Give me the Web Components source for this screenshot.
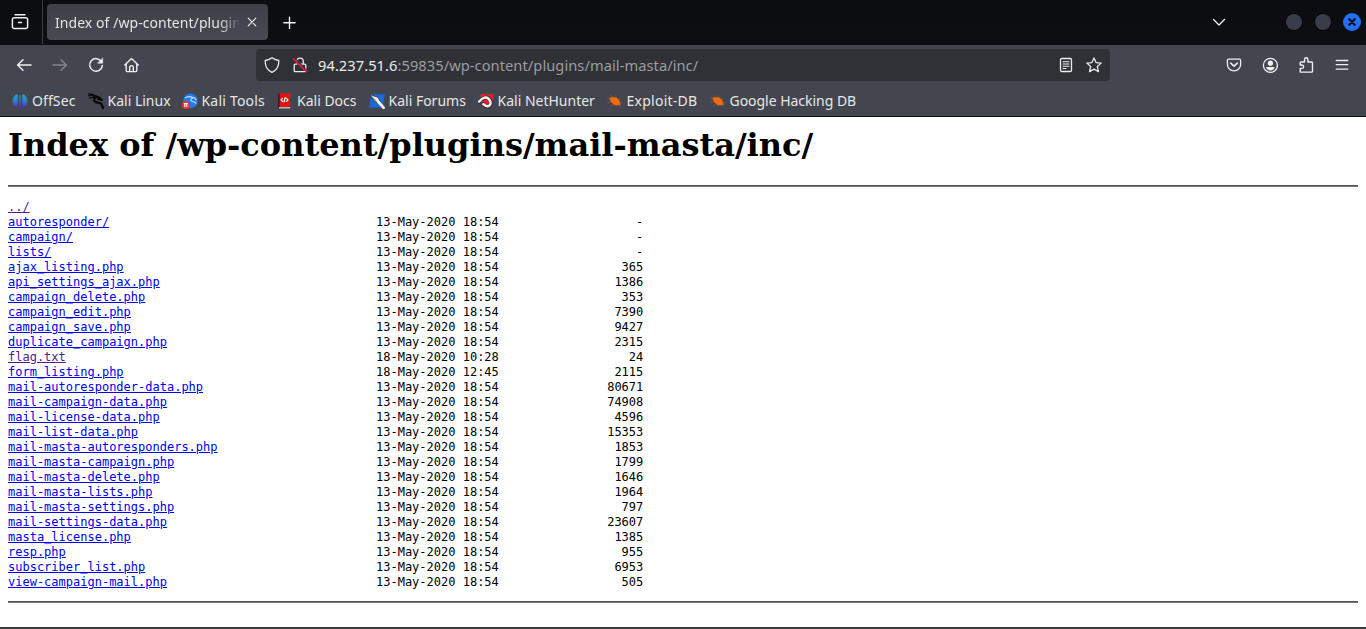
<!DOCTYPE html>
<html lang="en"><head><meta charset="utf-8"><title>Index of /wp-content/plugins/mail-masta/inc/</title>
<style>
html,body{margin:0;height:100%;overflow:hidden;background:#fff}
body{font-family:"Noto Sans",sans-serif}
</style></head><body>
<browser-window></browser-window>
<script>
const S = (w,body,h=w,vb=`0 0 ${w} ${h}`) => `<svg xmlns="http://www.w3.org/2000/svg" width="${w}" height="${h}" viewBox="${vb}" fill="none" stroke="currentColor" stroke-width="1.3" stroke-linecap="round" stroke-linejoin="round">${body}</svg>`;
const ICONS = {
 view: S(18,'<path d="M4 1.7h10" stroke-width="1.4"/><path d="M3.2 4.7h11.6a1.8 1.8 0 0 1 1.8 1.8v7.2a1.8 1.8 0 0 1-1.8 1.8H3.2a1.8 1.8 0 0 1-1.8-1.8V6.5a1.8 1.8 0 0 1 1.8-1.8z" stroke-width="1.5"/><path d="M7.5 9.5h3" stroke-width="1.5"/>'),
 close: S(10,'<path d="M1.2 1.2l7.6 7.6M8.8 1.2L1.2 8.8" stroke-width="1.1"/>'),
 plus: S(14,'<path d="M6.5 1.200v11.200M.9 6.800h11.200" stroke-width="1.400"/>'),
 chev: S(14,'<path d="M1.5 4.5L7 10l5.5-5.5" stroke-width="1.3"/>'),
 back: S(16,'<path d="M15 8H1.6M7 2.8L1.6 8 7 13.2" stroke-width="1.5"/>'),
 fwd: S(16,'<path d="M1 8h13.4M9 2.8L14.4 8 9 13.2" stroke-width="1.5"/>'),
 reload: S(16,'<path d="M13.4 4.6A6.3 6.3 0 1 0 14.3 8.6" stroke-width="1.5"/><path d="M14.7 1.2v5H9.8z" fill="currentColor" stroke-width=".5"/>'),
 home: S(16,'<path d="M.8 8L7.500 1.500 14.200 8M2.200 7v6.600a1 1 0 0 0 1 1h8.600a1 1 0 0 0 1-1V7M5.700 14.500V10.200A1.700 1.700 0 0 1 7.500 8.600a1.700 1.700 0 0 1 1.800 1.600v4.300" stroke-width="1.4"/>'),
 shield: S(16,'<path d="M8 .8C6 2.5 3.6 3.1 1.2 3.5 1 9 3 13.2 8 15.3c5-2.1 7-6.3 6.8-11.8C12.400 3.100 10 2.500 8 .8z"/>'),
 lock: S(16,'<path d="M4.700 4.500a3.300 3.300 0 0 1 6.600 0V7.200M4.700 7.200H3.400a1.200 1.200 0 0 0-1.200 1.200v5a1.200 1.200 0 0 0 1.200 1.200h9.200a1.200 1.200 0 0 0 1.200-1.200v-5a1.200 1.200 0 0 0-1.200-1.200H8"/><path d="M2.500 .8l13 13" stroke="#303137" stroke-width="1.100"/><path d="M1.500 1.700l13 13" stroke="#ff0f4d" stroke-width="1.600"/>'),
 reader: S(16,'<rect x="2.500" y="1.500" width="11" height="13" rx="1.200"/><path d="M5 4.700h6M5 7h6M5 9.300h6M5 11.500h3" stroke-width="1.100"/>'),
 star: S(16,'<path d="M8 .9l2.100 4.700 5.100.5-3.900 3.400 1.200 5.100L8 12.100l-4.500 2.500 1.200-5.100L.8 6.100l5.100-.5z" stroke-width="1.250"/>'),
 pocket: S(16,'<path d="M2.600 2.200h10.800a1.200 1.200 0 0 1 1.200 1.200V7.500A6.600 6.300 0 0 1 1.400 7.500V3.400a1.200 1.200 0 0 1 1.200-1.200z"/><path d="M4.700 6.100L8 9.100l3.300-3" stroke-width="1.500"/>'),
 user: S(16,'<circle cx="8.400" cy="8.300" r="7" stroke-width="1.300"/><g fill="currentColor" stroke="none"><circle cx="8.400" cy="6.200" r="2.600"/><path d="M4.200 10h8.400c0 2-2 3.400-4.200 3.400s-4.200-1.400-4.200-3.400z"/></g>'),
 ext: S(16,'<path d="M2.200 15.100V11.400h1.700a1.700 1.700 0 0 0 0-3.400H2.200V5.800a.8.800 0 0 1 .8-.8h3.500V2.500a1.700 1.700 0 0 1 3.400 0V5h3.800a.8.800 0 0 1 .8.800v8.500a.8.800 0 0 1-.8.800z" stroke-width="1.400"/>'),
 menu: S(16,'<path d="M2.200 3.500h11.600M2.200 7.700h11.600M2.200 12.200h11.600"/>'),
 x: S(18,'<circle cx="9" cy="9" r="9" fill="#2470f4" stroke="none"/><path d="M6.300 6.300l5.400 5.400M11.700 6.300l-5.400 5.400" stroke="#080c18" stroke-width="2.300"/>'),
 offsec: S(16,'<defs><linearGradient id="g" gradientUnits="userSpaceOnUse" x1="0" y1="1" x2="0" y2="15"><stop offset="0" stop-color="#18b3ba"/><stop offset=".5" stop-color="#2f7bd0"/><stop offset="1" stop-color="#6220d8"/></linearGradient></defs><g fill="url(#g)" stroke="none"><path d="M5.800 1.200v12.900C2.800 13.500.5 11 .5 7.700S2.800 1.800 5.800 1.200z"/><path d="M10.200 1.200v12.900c3-.6 5.300-3.100 5.300-6.400s-2.300-5.900-5.300-6.500z"/><path d="M7.300 2.500h1.400v13.300H7.300z"/></g><path d="M6.500 1v14M9.500 1v14" stroke="#44464f" stroke-width="1.200"/>'),
 kali: S(16,'<g stroke="#08090b"><path d="M.5 .8C4 .9 6.500 1.700 8.500 3.700M.5 2.800C3.500 2.100 6 2.500 8.500 3.800M1.500 5.200c2.500-1.200 4.500-1.200 6.500-1" stroke-width="1.200"/><path d="M8.500 3.800C5.700 5.100 5.300 7.600 7.200 8.900c2 1 5.500.3 6.300 2.300.5 1.300.8 2.400 1.800 4.100" stroke-width="2.300"/><path d="M6.500 3.500c3.500-.2 5.500.9 6.700 3M9.800 6l4.500 1.200" stroke-width="2"/></g>'),
 tools: S(16,'<circle cx="8.500" cy="7.900" r="7.300" fill="#217bef" stroke="none"/><path d="M3.300 4.800C6 3.400 9 3.500 10.700 5M10.700 5.200c-2.900.9-2.200 3.100.2 3.500 2 .2 2.700.9 3 2M9.500 4.700c2.300-.7 4 .8 4.700 2.300" stroke="#b9d9ff" stroke-width="1.200"/><path d="M0 11.700a3.700 3.700 0 0 1 7.500 0v.8a3.700 3.700 0 0 1-7.500 0z" fill="#ee302f" stroke="none"/><path d="M1.800 10.500h4M2.800 10.900v3M4.800 10.900v3" stroke="#fff" stroke-width="1.100" stroke-linecap="butt"/>'),
 docs: S(16,'<path d="M.8 .3h12.400v13.600H.8z" fill="#dc1515" stroke="none"/><path d="M.8 .3h2v15.200h-2z" fill="#3a1c4a" stroke="none"/><path d="M2 14h11.200v1.500H2z" fill="#bbb" stroke="none"/><path d="M5.500 5.300L4 6.800l1.500 1.500M9.500 5.300L11 6.800 9.500 8.300M8.200 4.700l-1.200 4.200" stroke="#fff" stroke-width="1.200"/>'),
 forums: S(16,'<path d="M2 1.200h13.800l-2 13.300H.3z" fill="#1769df" stroke="none"/><path d="M.4 1.300l8.800 3.200 3.200 6.500-6.200-2.300z" fill="#f4f4ef" stroke="#292b32" stroke-width=".8"/><path d="M9.500 9l5 5.700" stroke="#f2f2ed" stroke-width="2.800"/><path d="M.6 1.300l6.500 6.500" stroke="#484a52" stroke-width=".8"/>'),
 nethunter: S(16,'<path d="M2.500 1.300h13.300l-2.200 13.200H4z" fill="#e3202a" stroke="none"/><path d="M.9 9.500C4.500 4.500 9 3 11.500 6.200c3.300 4.400.8 7.500-2.300 7.500-1.900 0-3-1-4.200-2.300" stroke="#33353d" stroke-width="3.800"/><path d="M1.200 8.500c3.600-4.300 7.500-5.200 10-2 2.700 3.800.9 6.500-1.900 6.700-2 0-2.900-1-4-2" stroke="#f5f5f2" stroke-width="2.400"/>'),
 bug: S(16,'<g stroke="#b85f2b" stroke-width=".5"><path d="M1 5l3 2M3.500 2.300L6 5M8.700 3l.5 3M.7 9.500l4-.5M3.500 13.200l3.500-2.500M13 5.500l-2 1.500M15 10l-3-.5M13.500 13.500L11 11.500"/></g><path d="M2.700 4.800l3.500-.6L10 5l2.200 2.500 1.300 4.300-2.500.2-3 .2-3.800-3.200z" fill="#f36a12" stroke="#f36a12" stroke-width=".3"/>')
};
function def(name,html){
 customElements.define(name,class extends HTMLElement{
  connectedCallback(){ if(this.shadowRoot)return; const r=this.attachShadow({mode:'open'}); r.innerHTML=typeof html==='function'?html(this):html; }
 });
}
def('ui-icon',el=>`<style>:host{display:inline-flex;flex:none;align-items:center;justify-content:center}svg{display:block}</style>${ICONS[el.getAttribute('name')]}`);
def('tool-button',el=>`<style>:host{display:flex;flex:none;width:36px;height:36px;align-items:center;justify-content:center}:host([dim]){color:#83858b}</style><ui-icon name="${el.getAttribute('icon')}"></ui-icon>`);
def('tab-strip',`<style>
:host{display:flex;height:45px;background:linear-gradient(#0b0c0f,#0e0f13);color:#f0f0f2;align-items:flex-start}
.view{width:43px;height:44px;display:flex;align-items:center;justify-content:center;border-right:1px solid #3c3d42;box-sizing:border-box;padding-right:2px}
.tab{display:flex;align-items:center;box-sizing:border-box;margin:4px 0 0 4px;width:221px;height:36px;border-radius:4px;background:linear-gradient(#3e4047,#484a53);padding:0 11px 0 8px}
.label{flex:none;width:184px;overflow:hidden;white-space:nowrap;font-size:14px;letter-spacing:.06px;line-height:20px;padding-top:2px;color:#e3e4e6;-webkit-mask-image:linear-gradient(90deg,#000 163px,transparent 187px);mask-image:linear-gradient(90deg,#000 163px,transparent 187px)}
.tab ui-icon{margin-left:auto}
.plus{width:44px;height:45px}
.chev{margin-left:auto;height:43px;width:14px}
.controls{display:flex;gap:13px;height:44px;align-items:center;margin:0 5px 0 60px}
.dot{width:16px;height:16px;border-radius:50%;background:#383d49;box-shadow:0 0 0 1px #050609}
.controls ui-icon{margin-left:-1px}
</style><div class="view"><ui-icon name="view"></ui-icon></div><div class="tab"><span class="label"><slot></slot></span><ui-icon name="close"></ui-icon></div><ui-icon class="plus" name="plus"></ui-icon><ui-icon class="chev" name="chev"></ui-icon><div class="controls"><div class="dot"></div><div class="dot"></div><ui-icon name="x"></ui-icon></div>`);
def('address-bar',`<style>
:host{display:flex;box-sizing:border-box;width:854px;height:32px;border-radius:4px;background:#303137;align-items:center;padding:0 8px;color:#ebebed}
.lock{margin:0 10px 0 12px}
.url{font-size:14.67px;letter-spacing:.055px;line-height:20px;color:#9b9ca1;white-space:nowrap}.url b{font-weight:400;color:#ebebed}
.reader{margin-left:auto;margin-right:12px}
</style><ui-icon name="shield"></ui-icon><ui-icon class="lock" name="lock"></ui-icon><span class="url"><b>94.237.51.6</b>:59835/wp-content/plugins/mail-masta/inc/</span><ui-icon class="reader" name="reader"></ui-icon><ui-icon name="star"></ui-icon>`);
def('nav-bar',`<style>
:host{display:flex;height:40px;align-items:center;padding:0 6px;background:#44464f;color:#eeeeef}
address-bar{margin-left:106px}.right{display:flex;margin-left:auto}
</style><tool-button icon="back"></tool-button><tool-button icon="fwd" dim></tool-button><tool-button icon="reload"></tool-button><tool-button icon="home"></tool-button><address-bar></address-bar><div class="right"><tool-button icon="pocket"></tool-button><tool-button icon="user"></tool-button><tool-button icon="ext"></tool-button><tool-button icon="menu"></tool-button></div>`);
def('book-mark',el=>`<style>:host{display:flex;flex:none;align-items:center;gap:4px;white-space:nowrap;font-size:14px;line-height:20px;width:${el.getAttribute('w')}px;letter-spacing:${el.getAttribute('track')||0}px}</style><ui-icon name="${el.getAttribute('icon')}"></ui-icon><span><slot></slot></span>`);
def('bookmarks-bar',`<style>:host{display:flex;height:31px;box-sizing:border-box;align-items:center;padding:0 0 0 12px;background:#44464f;color:#e6e6e8}</style>
<book-mark icon="offsec" w="75.5" track=".1">OffSec</book-mark><book-mark icon="kali" w="94">Kali Linux</book-mark><book-mark icon="tools" w="95.5" track=".2">Kali Tools</book-mark><book-mark icon="docs" w="91.5">Kali Docs</book-mark><book-mark icon="forums" w="109">Kali Forums</book-mark><book-mark icon="nethunter" w="129">Kali NetHunter</book-mark><book-mark icon="bug" w="103" track=".25">Exploit-DB</book-mark><book-mark icon="bug" w="160" track="-.03">Google Hacking DB</book-mark>`);
const D='13-May-2020 18:54';
const FILES=[['autoresponder/',D,'-'],['campaign/',D,'-'],['lists/',D,'-'],['ajax_listing.php',D,'365'],['api_settings_ajax.php',D,'1386'],['campaign_delete.php',D,'353'],['campaign_edit.php',D,'7390'],['campaign_save.php',D,'9427'],['duplicate_campaign.php',D,'2315'],['flag.txt','18-May-2020 10:28','24'],['form_listing.php','18-May-2020 12:45','2115'],['mail-autoresponder-data.php',D,'80671'],['mail-campaign-data.php',D,'74908'],['mail-license-data.php',D,'4596'],['mail-list-data.php',D,'15353'],['mail-masta-autoresponders.php',D,'1853'],['mail-masta-campaign.php',D,'1799'],['mail-masta-delete.php',D,'1646'],['mail-masta-lists.php',D,'1964'],['mail-masta-settings.php',D,'797'],['mail-settings-data.php',D,'23607'],['masta_license.php',D,'1385'],['resp.php',D,'955'],['subscriber_list.php',D,'6953'],['view-campaign-mail.php',D,'505']];
def('file-row',el=>`<style>:host{display:grid;grid-template-columns:368px 17ch 20ch;height:15px;line-height:15px;white-space:pre}a{color:#0000ee;text-decoration:underline}a.visited{color:#551a8b}.size{text-align:right}</style><span><a href="#" class="${el.hasAttribute('visited')?'visited':''}">${el.getAttribute('name')}</a></span><span>${el.getAttribute('date')||''}</span><span class="size">${el.getAttribute('size')||''}</span>`);
def('directory-page',`<style>
:host{display:block;padding:9px 8px 0;background:#fff;color:#000;box-sizing:border-box}
h1{font:bold 32px/38px "DejaVu Serif",serif;margin:0 0 21px;white-space:nowrap}
hr{margin:0;border:0;height:1px;border-top:1px solid #555559;background:#77777b}
.list{font:12px/15px "DejaVu Sans Mono",monospace;margin:13px 0 11px}
</style><h1>Index of /wp-content/plugins/mail-masta/inc/</h1><hr><div class="list"><file-row name="../" visited></file-row>${FILES.map(([n,d,s])=>`<file-row name="${n}" date="${d}" size="${s}"${n==='flag.txt'?' visited':''}></file-row>`).join('')}</div><hr>`);
def('browser-window',`<style>:host{display:flex;flex-direction:column;width:1366px;height:629px;box-sizing:border-box;border-bottom:2px solid #38383b}directory-page{flex:1;border-top:1px solid #0c0d10}</style><tab-strip>Index of /wp-content/plugins/mail-masta/inc/</tab-strip><nav-bar></nav-bar><bookmarks-bar></bookmarks-bar><directory-page></directory-page>`);
</script></body></html>
